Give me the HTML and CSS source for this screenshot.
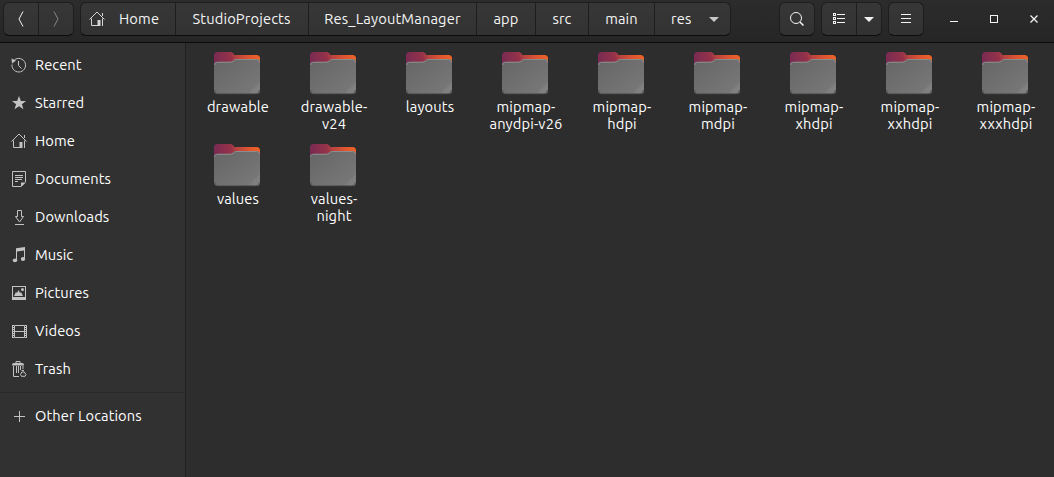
FILE: index.html
```html
<!DOCTYPE html>
<html lang="en">
<head>
<meta charset="utf-8">
<title>Files</title>
<link rel="stylesheet" href="styles.css">
</head>
<body>
<svg class="defs" width="0" height="0">
  <defs>
    <linearGradient id="tab" gradientUnits="userSpaceOnUse" x1="0" y1="13" x2="46" y2="4"><stop offset="0" stop-color="#772953"/><stop offset=".38" stop-color="#95324a"/><stop offset=".5" stop-color="#b84340"/><stop offset=".75" stop-color="#dd5430"/><stop offset="1" stop-color="#f06427"/></linearGradient>
    <linearGradient id="front" x1="0" y1="0" x2="1" y2="1"><stop offset="0" stop-color="#656565"/><stop offset="1" stop-color="#7a7a7a"/></linearGradient>
    <symbol id="folder" viewBox="0 0 46 43">
      <path d="M0 13V3.500Q0 0 3.500 0H16Q17.800 0 19 1.200L20.500 3H42.500Q46 3 46 6.500V13Z" fill="url(#tab)"/>
      <path d="M0 38V13Q0 9.800 3.500 9.800H16Q18 9.800 19.200 8.600L20.200 7.700Q21.200 7 23 7H42.500Q46 7 46 10.500V38Q46 42 42 42H4Q0 42 0 38Z" fill="url(#front)"/>
      <path d="M34 42L46 30V38Q46 42 42 42Z" fill="#858585" opacity=".6"/>
      <path d="M.5 13Q.5 10.300 3.500 10.300H16Q18 10.300 19.500 9L20.500 8.100Q21.500 7.500 23 7.500H42.500Q45.500 7.500 45.500 10.500" fill="none" stroke="#8c8c8c"/>
      <path d="M.5 38Q.5 41.700 4 41.700H42Q45.500 41.700 45.500 38" fill="none" stroke="#555"/>
    </symbol>
    <symbol id="home" viewBox="0 0 16 16">
      <path d="M.5 8.500L8 1L15.500 8.500M2.500 7.500V14.500H9M13.500 7.500V15M13.500 2V5" fill="none" stroke="currentColor"/>
      <path d="M8.500 9h3v6h-3z" fill="currentColor"/>
    </symbol>
  </defs>
</svg>
<div class="window">
  <header class="headerbar">
    <div class="group nav">
      <button class="btn cell35"><svg class="icon" viewBox="0 0 16 16"><path d="M10 .5L6 8L10 15.500" class="line"/></svg></button>
      <button class="btn cell35 dim"><svg class="icon" viewBox="0 0 16 16"><path d="M6 .5L10 8L6 15.500" class="line"/></svg></button>
    </div>
    <nav class="group path">
      <button class="btn p-home"><svg class="icon"><use href="#home"/></svg><span>Home</span></button>
      <button class="btn p-studio"><span>StudioProjects</span></button>
      <button class="btn p-layout"><span>Res_LayoutManager</span></button>
      <button class="btn p-app"><span>app</span></button>
      <button class="btn p-src"><span>src</span></button>
      <button class="btn p-main"><span>main</span></button>
      <button class="btn p-res"><span>res</span><svg class="arrow" viewBox="0 0 10 5"><path d="M0 0H10L5 5Z"/></svg></button>
    </nav>
    <div class="group search">
      <button class="btn cell34"><svg class="icon" viewBox="0 0 16 16"><circle cx="7" cy="7" r="5.500" class="line"/><path d="M11 11L14.500 14.500" class="line thick"/></svg></button>
    </div>
    <div class="group view">
      <button class="btn cell34"><svg class="icon" viewBox="0 0 16 16"><path d="M2.500 2.500h2v2h-2zM2.500 6.500h2v2h-2zM2.500 10.500h2v2h-2zM6 3.500h8M6 7.500h8M6 11.500h8" class="line crisp"/></svg></button>
      <button class="btn cell24"><svg class="arrow bright" viewBox="0 0 10 5"><path d="M0 0H10L5 5Z"/></svg></button>
    </div>
    <div class="group menu">
      <button class="btn cell34"><svg class="icon" viewBox="0 0 16 16"><path d="M3 3.500h10M3 7.500h10M3 11.500h10" class="line crisp"/></svg></button>
    </div>
    <div class="controls">
      <svg class="icon" viewBox="0 0 16 16"><path d="M4 10.500h8" class="line crisp"/></svg>
      <svg class="icon" viewBox="0 0 16 16"><path d="M4.500 4.500h7v7h-7z" class="line crisp"/></svg>
      <svg class="icon" viewBox="0 0 16 16"><path d="M4.500 4.500l7 7M11.500 4.500l-7 7" class="line cross"/></svg>
    </div>
  </header>
  <main class="body">
    <aside class="sidebar">
      <div class="place"><svg class="icon" viewBox="0 0 16 16"><path d="M2.200 4.300A6.800 6.800 0 1 1 1 7.500M7.500 4V8.500L10.500 11.500" class="line"/><path d="M.5 1.500L5 3.500L1 6.500Z" fill="currentColor"/></svg><span>Recent</span></div>
      <div class="place"><svg class="icon" viewBox="0 0 16 16"><path d="M8 1L9.900 6H15L10.900 9.200L12.500 14.300L8 11.300L3.500 14.300L5.100 9.200L1 6H6.100Z" fill="currentColor"/></svg><span>Starred</span></div>
      <div class="place"><svg class="icon"><use href="#home"/></svg><span>Home</span></div>
      <div class="place"><svg class="icon" viewBox="0 0 16 16"><path d="M10 15.500H1.500V.5H14.500V11M4 4.500h8M4 6.500h8M4 8.500h7M4 10.500h3" class="line"/><path d="M10 16V11.500H15Z" fill="currentColor"/></svg><span>Documents</span></div>
      <div class="place"><svg class="icon" viewBox="0 0 16 16"><path d="M6.500 1.500h4v6h2L8.500 13L4.500 7.500h2zM4 15.500h9" class="line"/></svg><span>Downloads</span></div>
      <div class="place"><svg class="icon" viewBox="0 0 16 16"><path d="M5 1.200L14 0V12H13V3.500L6 4.500V14H5Z" fill="currentColor"/><ellipse cx="4" cy="13.300" rx="2.200" ry="1.900" fill="currentColor"/><ellipse cx="12" cy="12" rx="2.200" ry="1.900" fill="currentColor"/></svg><span>Music</span></div>
      <div class="place"><svg class="icon" viewBox="0 0 16 16"><path d="M1 1h14v14H1zM2 2v10h12V2z" fill="currentColor" fill-rule="evenodd"/><path d="M3 11L5 7L6 8L7.500 5L9 8L10 7L12 11Z" fill="currentColor"/><circle cx="11.500" cy="4.500" r="1.500" fill="currentColor"/></svg><span>Pictures</span></div>
      <div class="place"><svg class="icon" viewBox="0 0 16 16"><path d="M3.500 2.500h10v12h-10zM4 8.500h9" class="line"/><path d="M1.500 2v13M15.500 2v13" class="line"/><path d="M2.500 2v13M14.500 2v13" class="line" stroke-dasharray="1 1"/></svg><span>Videos</span></div>
      <div class="place"><svg class="icon" viewBox="0 0 16 16"><path d="M5 2.500V.5h4v2M2.500 5V15.500H8M5.500 5v7M7.500 5v7M9.500 5v4M12 5v3" class="line"/><path d="M1 4.500V3.500Q1 2 3 2H11Q13 2 13 3.500V4.500Z" fill="currentColor"/><path d="M10.500 9.500h2.500M10.800 11L9.500 13.500L10.500 15.300H14L15 13.500L13.200 11Z" class="line"/></svg><span>Trash</span></div>
      <hr class="separator">
      <div class="place"><svg class="icon" viewBox="0 0 16 16"><path d="M3 8.500h11M8.500 3v11" class="line"/></svg><span>Other Locations</span></div>
    </aside>
    <section class="files">
      <div class="file"><svg class="folder"><use href="#folder"/></svg><span>drawable</span></div>
      <div class="file"><svg class="folder"><use href="#folder"/></svg><span>drawable-<br>v24</span></div>
      <div class="file"><svg class="folder"><use href="#folder"/></svg><span>layouts</span></div>
      <div class="file"><svg class="folder"><use href="#folder"/></svg><span>mipmap-<br>anydpi-v26</span></div>
      <div class="file"><svg class="folder"><use href="#folder"/></svg><span>mipmap-<br>hdpi</span></div>
      <div class="file"><svg class="folder"><use href="#folder"/></svg><span>mipmap-<br>mdpi</span></div>
      <div class="file"><svg class="folder"><use href="#folder"/></svg><span>mipmap-<br>xhdpi</span></div>
      <div class="file"><svg class="folder"><use href="#folder"/></svg><span>mipmap-<br>xxhdpi</span></div>
      <div class="file"><svg class="folder"><use href="#folder"/></svg><span>mipmap-<br>xxxhdpi</span></div>
      <div class="file"><svg class="folder"><use href="#folder"/></svg><span>values</span></div>
      <div class="file"><svg class="folder"><use href="#folder"/></svg><span>values-<br>night</span></div>
    </section>
  </main>
</div>
</body>
</html>
```
FILE: styles.css
```css
* { box-sizing: border-box; }
body {
  margin: 0;
  background: #2d2d2d;
  color: #fff;
  font: 14.667px/17px Ubuntu, "Noto Sans", sans-serif;
  letter-spacing: .08px;
}
.defs { display: block; }
.window { display: flex; flex-direction: column; width: 1054px; height: 477px; overflow: hidden; }
.icon { width: 16px; height: 16px; flex: none; display: block; }
.line { fill: none; stroke: currentColor; stroke-width: 1; }
.thick { stroke-width: 1.500; }
.cross { stroke-width: 1.300; }
.crisp { shape-rendering: crispEdges; }

.headerbar {
  display: flex;
  flex: none;
  height: 43px;
  padding: 2px 0 0 3px;
  background: linear-gradient(#2c2c2c, #262626);
  border-bottom: 1px solid #0b0b0b;
}
.group {
  display: flex;
  height: 34px;
  border: 1px solid #1d1d1d;
  border-bottom-color: #0d0d0d;
  border-radius: 6px;
  background: linear-gradient(#373737, #323232);
  overflow: hidden;
}
.btn {
  display: flex;
  align-items: center;
  justify-content: center;
  padding: 0;
  border: 0;
  border-left: 1px solid #1d1d1d;
  background: none;
  color: #f4f4f4;
  font: inherit;
  letter-spacing: .15px;
  white-space: nowrap;
}
.btn:first-child { border-left: 0; }
.btn span, .place span { padding-bottom: 2px; }
.nav { width: 71px; }
.cell35 { flex: 1; padding-right: 1px; }
.cell34 { width: 34px; flex: none; }
.cell24 { flex: 1; }
.btn.dim { color: #858585; }
.path { width: 651px; margin-left: 6px; }
.p-home { width: 94px; gap: 14px; justify-content: flex-start; padding-left: 8px; }
.p-home .icon { color: #d5d5d5; }
.p-studio { width: 133px; padding-right: 1px; }
.p-layout { width: 168px; }
.p-app { width: 59px; }
.p-src { width: 53px; }
.p-main { width: 66px; }
.p-res { width: 76px; gap: 18px; justify-content: flex-start; padding-left: 16px; }
.arrow { width: 10px; height: 5px; fill: #c8c8c8; }
.bright { fill: #f2f2f2; }
.search { width: 36px; margin-left: 48px; }
.view { width: 61px; margin-left: 6px; }
.view .cell34, .menu .cell34 { padding-bottom: 1px; }
.menu { width: 36px; margin-left: 6px; }
.controls { display: flex; gap: 24px; margin-left: 22px; padding-top: 9px; color: #f4f4f4; }

.body { display: flex; flex: 1; }
.sidebar {
  width: 186px;
  padding-top: 3px;
  background: #313131;
  border-right: 1px solid #1f1f1f;
}
.place { display: flex; align-items: center; gap: 8px; height: 38px; padding-left: 11px; }
.place .icon { color: #c3c3c3; }
.separator { height: 1px; margin: 4px 0; border: 0; background: #292929; }
.files {
  display: grid;
  grid-template-columns: repeat(9, 96px);
  grid-auto-rows: 92px;
  align-content: start;
  padding: 9px 0 0 3px;
}
.file { display: flex; flex-direction: column; align-items: center; gap: 3px; text-align: center; letter-spacing: .15px; }
.file span { padding-left: 2px; }
.folder { width: 46px; height: 43px; flex: none; }
```
